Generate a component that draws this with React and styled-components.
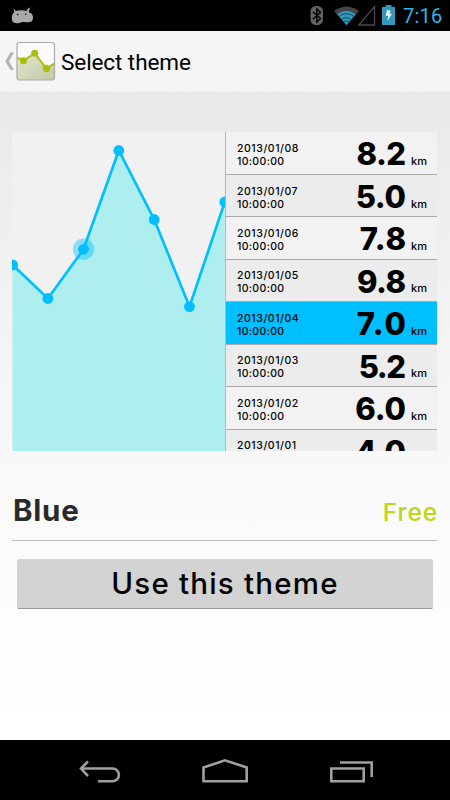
import React from "react";
import styled, { createGlobalStyle } from "styled-components";

const Global = createGlobalStyle`
  * { box-sizing: border-box; }
  body { margin: 0; background: #000; }
`;

const Screen = styled.div`
  width: 450px;
  height: 800px;
  display: flex;
  flex-direction: column;
  overflow: hidden;
  color: #000;
  font-family: Inter, sans-serif;
`;

const StatusBar = styled.div`
  height: 31px;
  flex: none;
  display: flex;
  background: #000;
`;

const Spacer = styled.div`
  flex: 1;
`;

const Clock = styled.span`
  width: 47px;
  color: #33b5e5;
  font: 400 20px/32px Roboto, sans-serif;
  letter-spacing: 0.2px;
`;

const ActionBar = styled.header`
  height: 61px;
  flex: none;
  display: flex;
  align-items: center;
  background: repeating-linear-gradient(45deg, #f4f4f4 0 2px, #f6f6f6 2px 4px);
  border-bottom: 1px solid #f0f0f0;
`;

const Title = styled.h1`
  margin: 0 0 0 4px;
  font: 400 22.5px/30px Roboto, sans-serif;
  letter-spacing: -0.08px;
  padding-top: 2px;
`;

const Content = styled.main`
  flex: 1;
  padding: 40px 13px 0 12px;
  background: linear-gradient(#e9e9e9 0%, #f0f0f0 24%, #f9f9f9 60%, #fdfdfd 82%, #fff 100%);
`;

const Preview = styled.section`
  display: flex;
  height: 318.6px;
  overflow: hidden;
  background: #f1f1f1;
`;

const Chart = styled.svg`
  flex: none;
  display: block;
`;

const List = styled.div`
  flex: 1;
  border-left: 1px solid #b4b4b4;
`;

const Row = styled.div`
  height: ${(p) => (p.$first ? 43 : 42.45)}px;
  display: flex;
  padding: 0 9px 0 11px;
  background: ${(p) => (p.$active ? "#00bfff" : p.$alt ? "#ececec" : "#f2f2f2")};
  border-bottom: 1px solid #aaa;
`;

const Stamp = styled.div`
  flex: 1;
  padding-top: ${(p) => (p.$first ? 10 : 9.5)}px;
  font-size: 10.5px;
  line-height: 13px;
  font-weight: 500;
  white-space: pre;
`;

const Line = styled.div`
  letter-spacing: ${(p) => p.$spacing}px;
`;

const Value = styled.span`
  font-size: 31px;
  line-height: 43px;
  font-weight: 800;
  letter-spacing: ${(p) => p.$spacing}px;
  margin-right: ${(p) => -p.$spacing}px;
`;

const Unit = styled.span`
  width: 22px;
  padding: ${(p) => (p.$first ? 23 : 22.5)}px 0 0 5px;
  font-size: 11px;
  line-height: 13px;
  font-weight: 500;
  letter-spacing: 0.2px;
`;

const Summary = styled.div`
  height: 90px;
  display: flex;
  justify-content: space-between;
  border-bottom: 1px solid #bababa;
`;

const Name = styled.h2`
  margin: 0 0 0 1px;
  padding-top: 41px;
  color: #2a2a2a;
  font-size: 29.5px;
  line-height: 36px;
  font-weight: 700;
  letter-spacing: 0.8px;
`;

const Price = styled.span`
  padding-top: 46px;
  margin-right: -1px;
  color: #bfd414;
  font-size: 24.5px;
  line-height: 30px;
  font-weight: 500;
  letter-spacing: 0.9px;
`;

const UseButton = styled.button`
  display: block;
  width: 416px;
  height: 50px;
  margin: 18px 0 0 5px;
  padding: 0 0 1px;
  border: 0;
  border-bottom: 1.5px solid #999;
  border-radius: 2px;
  background: #d3d3d3;
  color: #000;
  font: 500 29.5px/48px Inter, sans-serif;
  letter-spacing: 1.2px;
`;

const NavBar = styled.footer`
  height: 60px;
  flex: none;
  background: #000;
`;

const rows = [
  { day: "08", km: "8.2", spacing: -0.6 },
  { day: "07", km: "5.0", spacing: -0.3 },
  { day: "06", km: "7.8", spacing: 0.7 },
  { day: "05", km: "9.8", spacing: -0.5 },
  { day: "04", km: "7.0", spacing: 1.7 },
  { day: "03", km: "5.2", spacing: -1.5 },
  { day: "02", km: "6.0", spacing: -0.1 },
  { day: "01", km: "4.0", spacing: -0.5 },
];

const points = [
  [0.7, 133],
  [35.9, 166.5],
  [71.5, 117.3],
  [106.8, 18.5],
  [142.2, 87.5],
  [177.5, 174.7],
  [212.8, 70],
];
const path = points.map((p) => p.join(",")).join(" ");

function ThemeChart() {
  return (
    <Chart width="213" height="318.6" viewBox="0 0 213 318.6">
      <polygon points={`0.5,133 ${path} 213,319 0.5,319`} fill="#afeeee" />
      <circle cx="71.5" cy="117.3" r="10.7" fill="#00bfff" opacity=".42" />
      <polyline points={path} fill="none" stroke="#00bfff" strokeWidth="2.7" />
      {points.map(([x, y]) => (
        <circle key={x} cx={x} cy={y} r="5.4" fill="#00bfff" />
      ))}
    </Chart>
  );
}

function Robot() {
  return (
    <svg width="45" height="31" viewBox="0 0 45 31">
      <path d="M13.4 8.2 16 11Q21 9.5 26.3 11L29 7.5 29.9 8 28.8 12.2Q33 13.4 33 17.5 33 22.8 27 22.3 22 21.6 19.4 23 14 24.2 12.2 21 10.7 15 14.4 12Z" fill="#a9a9a9" />
      <circle cx="17.7" cy="14.5" r=".8" fill="#000" />
      <circle cx="25.7" cy="14.2" r=".8" fill="#000" />
    </svg>
  );
}

function StatusIcons() {
  return (
    <svg width="93" height="31" viewBox="310 0 93 31">
      <rect x="310.5" y="6" width="12.5" height="19" rx="5.5" fill="#626262" />
      <path d="M312.8 11.8 320.5 18.5 316.8 22V9L320.5 12.5 312.8 19.2" fill="none" stroke="#000" strokeWidth="1.4" />
      <path d="M334 11Q346.5 2 359 11L355.6 14.8Q346.5 8.4 337.4 14.8Z" fill="#454545" />
      <path d="M337.2 14.3Q346.5 7.3 355.8 14.3L346.5 25.3Z" fill="#3298bd" />
      <path d="M339.3 16.3Q346.5 11 353.7 16.3M342 19.2Q346.5 16 351 19.2M344.2 21.6Q346.5 20.2 348.8 21.6" fill="none" stroke="#123e4e" strokeWidth=".9" />
      <path d="M358.7 25H374.5V6.5Z" fill="none" stroke="#4a4a4a" strokeWidth="1.3" />
      <path d="M382 7H385.5V5H391.5V7H395V25H382Z" fill="#3298bd" />
      <path d="M387 10 385.7 16 388.3 15.7 387.4 21 392 13.7 389.3 14 390.7 10.8Z" fill="#eefbff" />
    </svg>
  );
}

function AppIcon() {
  return (
    <svg width="57" height="60" viewBox="0 31 57 60">
      <defs>
        <linearGradient id="area" x1="0" y1="0" x2="1" y2="1">
          <stop offset="0" stopColor="#e2e5cf" />
          <stop offset="1" stopColor="#c4c9a6" />
        </linearGradient>
        <clipPath id="tile">
          <rect x="17" y="42.5" width="38" height="37.5" rx="2.5" />
        </clipPath>
      </defs>
      <path d="M14 52.5 10.4 52.5 5.2 61.3 10.4 70 14 70 9 61.3Z" fill="#b3b3b3" />
      <g clipPath="url(#tile)">
        <rect x="17" y="42.5" width="38" height="38" fill="#fafafa" />
        <path d="M17 57.5 23.4 60.7 34.7 53.3 46.5 68.5 55 63V80H17Z" fill="url(#area)" />
        <path d="M17 57.5 23.4 60.7 34.7 53.3 46.5 68.5 55 63" fill="none" stroke="#a9bd0b" strokeWidth="1.9" />
        <g fill="#a9bd0b">
          <circle cx="23.4" cy="60.7" r="3.5" />
          <circle cx="34.7" cy="53.3" r="3.5" />
          <circle cx="46.5" cy="68.5" r="3.7" />
        </g>
      </g>
      <rect x="17" y="42.5" width="37.5" height="37.5" rx="2.5" fill="none" stroke="#aaa" strokeWidth="1.2" />
    </svg>
  );
}

function NavIcons() {
  return (
    <svg width="450" height="60" viewBox="0 740 450 60">
      <g fill="none" stroke="#a0a0a0" strokeWidth="2.6">
        <path d="M82 768.5H112.5A6.4 6.4 0 0 1 112.5 781.3H98" />
        <path d="M88 761.3 81 768.6 88 776" />
        <path d="M203.5 781.3V767.5L225 760.3 246.7 767.5V781.3Z" />
        <path d="M331.3 768.5H363.7V781.3H331.3Z" />
        <path d="M340 762.5H371.7V777" />
      </g>
    </svg>
  );
}

export default function App() {
  return (
    <Screen>
      <Global />
      <StatusBar>
        <Robot />
        <Spacer />
        <StatusIcons />
        <Clock>7:16</Clock>
      </StatusBar>
      <ActionBar>
        <AppIcon />
        <Title>Select theme</Title>
      </ActionBar>
      <Content>
        <Preview>
          <ThemeChart />
          <List>
            {rows.map(({ day, km, spacing }, i) => (
              <Row key={day} $first={i === 0} $alt={i % 2 === 1} $active={day === "04"}>
                <Stamp $first={i === 0}>
                  <Line $spacing={0.55}>2013/01/{day}</Line>
                  <Line $spacing={0.35}>10:00:00</Line>
                </Stamp>
                <Value $spacing={spacing}>{km}</Value>
                <Unit $first={i === 0}>km</Unit>
              </Row>
            ))}
          </List>
        </Preview>
        <Summary>
          <Name>Blue</Name>
          <Price>Free</Price>
        </Summary>
        <UseButton>Use this theme</UseButton>
      </Content>
      <NavBar>
        <NavIcons />
      </NavBar>
    </Screen>
  );
}
